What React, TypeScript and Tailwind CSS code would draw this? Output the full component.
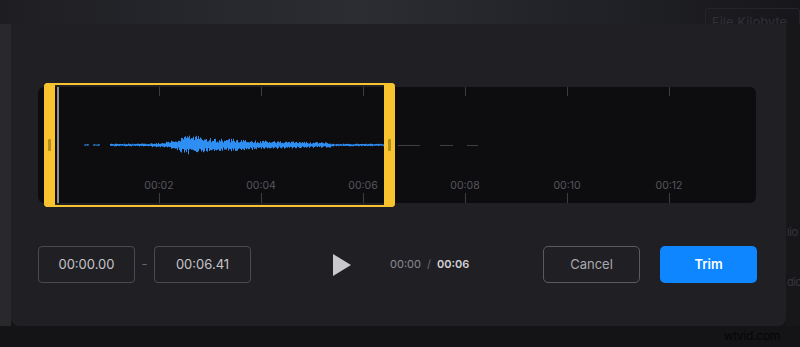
import React from "react"

// deterministic noise for the waveform
function makeRand(seed: number) {
  let s = seed
  return () => {
    s = (s * 16807) % 2147483647
    return s / 2147483647
  }
}

const TRACK_LEFT = 38
const CENTER_Y = 62

function buildWave() {
  const rnd = makeRand(42)
  let d = ""
  for (let x = 84; x <= 383; x += 1) {
    if (x < 101 && ((x > 88 && x < 93) || x > 99)) continue
    if (x >= 101 && x < 110) continue
    let amp = 0.7
    if (x >= 110) amp = 1.2
    if (x >= 150) amp = 1.7
    amp += 5.2 * Math.exp(-Math.pow((x - 190) / 18, 2))
    amp += 3.4 * Math.exp(-Math.pow((x - 228) / 36, 2))
    amp += 1.2 * Math.exp(-Math.pow((x - 290) / 40, 2))
    if (x > 330) amp = 1.1
    const a = amp * (0.45 + rnd() * 0.75)
    const b = amp * (0.45 + rnd() * 0.75)
    const px = x - TRACK_LEFT + 0.5
    d += `M${px} ${(CENTER_Y - a).toFixed(1)}V${(CENTER_Y + b).toFixed(1)}`
  }
  return d
}

const wavePath = buildWave()

const labels = ["00:02", "00:04", "00:06", "00:08", "00:10", "00:12"]

function Handle({ side }: { side: "left" | "right" }) {
  return (
    <div
      className={`absolute top-[-2px] bottom-[-2px] flex w-[11px] items-center justify-center bg-[#f8c32f] ${
        side === "left" ? "left-0 rounded-l-[4px]" : "right-0 w-[10px] rounded-r-[4px]"
      }`}
    >
      <div className="h-[12px] w-[3px] rounded-[1px] bg-[#b48d1e]" />
    </div>
  )
}

function Timeline() {
  return (
    <div className="relative h-[124px] w-[718px] py-[4px]">
      <div className="flex h-full rounded-[6px] bg-[#0d0d10] pl-[70px]">
        {labels.map((l) => (
          <div key={l} className="flex w-[102px] flex-col items-center">
            <div className="h-[9px] w-px bg-[#3c3c42]" />
            <div className="flex-1" />
            <span className="text-[10.5px] leading-[12px] text-[#56565c]">{l}</span>
            <div className="mt-px h-[10px] w-px bg-[#3c3c42]" />
          </div>
        ))}
      </div>

      <svg className="absolute inset-0" width={718} height={124} viewBox="0 0 718 124">
        <path d={wavePath} stroke="#2f8ef2" strokeWidth={1} fill="none" />
        {/* faint leftovers outside the selection */}
        <g stroke="#3e3e44" strokeWidth={1}>
          <line x1={360} y1={62.5} x2={382} y2={62.5} />
          <line x1={402} y1={62.5} x2={415} y2={62.5} />
          <line x1={429} y1={62.5} x2={440} y2={62.5} />
        </g>
      </svg>

      {/* playhead */}
      <div className="absolute left-[19px] top-[4px] bottom-[4px] w-[2px] bg-[#8c8c90]" />

      {/* selection */}
      <div className="absolute left-[6px] top-0 h-[124px] w-[351px] rounded-[4px] border-y-2 border-[#f8c32f]">
        <Handle side="left" />
        <Handle side="right" />
      </div>
    </div>
  )
}

function TimeBox({ value }: { value: string }) {
  return (
    <div className="flex h-[37px] w-[97px] items-center justify-center rounded-[4px] border border-[#4a4a50] text-[13px] text-[#c4c4c8]">
      {value}
    </div>
  )
}

export default function App() {
  return (
    <div
      className="relative h-[347px] w-[800px] overflow-hidden bg-[#141417]"
      style={{ fontFamily: "Inter, 'Liberation Sans', sans-serif" }}
    >
      {/* blurred page behind the dialog */}
      <div className="flex h-full flex-col">
        <div className="flex h-[24px] justify-end bg-[linear-gradient(90deg,#1e1e22_0%,#26272c_25%,#2c2d33_45%,#24252a_65%,#17171b_100%)] pt-[8px]">
          <div className="h-[30px] w-[95px] rounded-[3px] border border-[#24242a] px-[6px] pt-[4px] text-[13px] text-[#303036]">
            File Kilobyte
          </div>
        </div>
        <div className="flex h-[302px]">
          <div className="w-[11px] bg-[#29292c]" />
          <div className="flex-1" />
          <div className="flex w-[14px] flex-col gap-[32px] overflow-hidden bg-[#17171a] pl-[1px] pt-[199px] text-[11px] leading-[18px] tracking-[-0.4px] text-[#36363b]">
            <span>lio</span>
            <span>dic</span>
          </div>
        </div>
        <div className="flex flex-1 justify-end pr-[20px]">
          <span className="text-[12px] leading-[20px] tracking-[-0.3px] text-[#050505]">wtvid.com</span>
        </div>
      </div>

      {/* dialog */}
      <div className="absolute left-[11px] top-[24px] flex h-[302px] w-[775px] flex-col rounded-b-[8px] bg-[#202024] pt-[59px]">
        <div className="pl-[27px]">
          <Timeline />
        </div>

        <div className="mt-[39px] flex items-center pl-[27px] pr-[29px]">
          <TimeBox value="00:00.00" />
          <span className="w-[19px] text-center text-[13px] text-[#66666c]">-</span>
          <TimeBox value="00:06.41" />

          <svg className="ml-[82px]" width={18} height={22} viewBox="0 0 18 22">
            <polygon points="0,0 18,11 0,22" fill="#c9c9cd" />
          </svg>

          <div className="ml-[39px] flex items-center gap-[6px] text-[11px]">
            <span className="text-[#8a8a8f]">00:00</span>
            <span className="text-[#6a6a70]">/</span>
            <span className="font-semibold text-[#d2d2d6]">00:06</span>
          </div>

          <button className="ml-auto h-[37px] w-[97px] rounded-[5px] border border-[#5a5a60] text-[13px] text-[#a8a8ad]">
            Cancel
          </button>
          <button className="ml-[20px] h-[37px] w-[97px] rounded-[5px] bg-[#0d86ff] text-[13px] font-semibold text-white">
            Trim
          </button>
        </div>
      </div>
    </div>
  )
}
